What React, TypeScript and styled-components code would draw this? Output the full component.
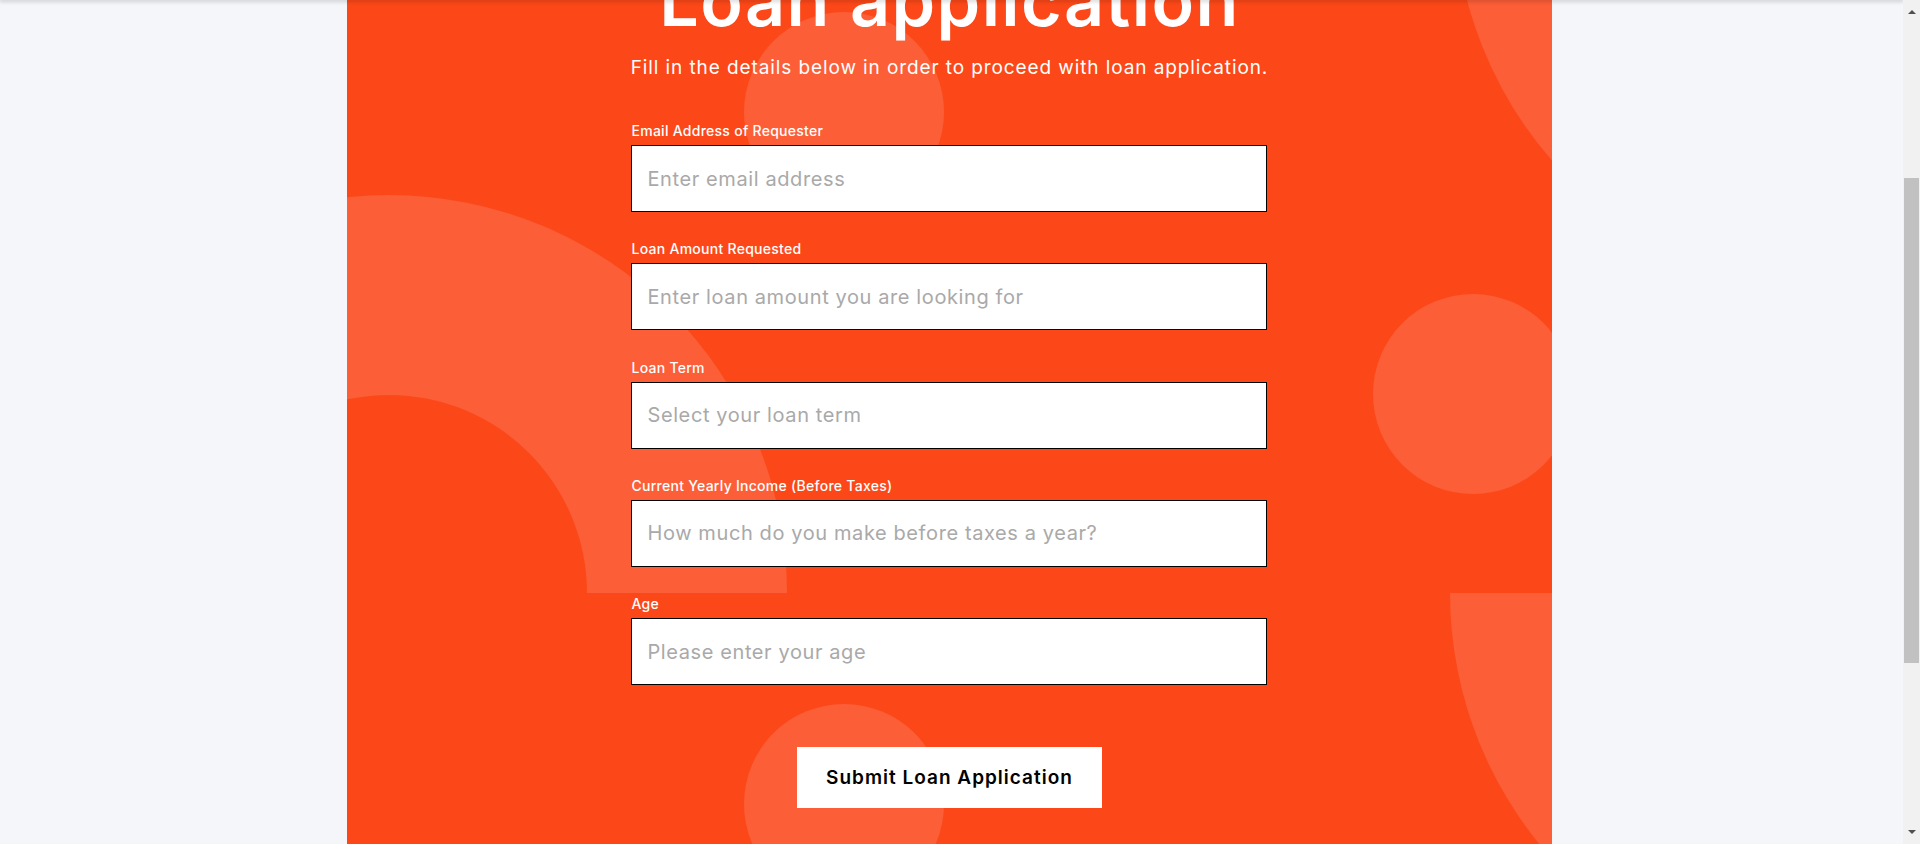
import React, { useLayoutEffect } from "react";
import styled, { createGlobalStyle } from "styled-components";

const SCROLL_Y = 278;
const ORANGE = "#fc4818";
const ORANGE_LIGHT = "#fc5e37";

const GlobalStyle = createGlobalStyle`
  html { background: #f5f6fa; }
  body {
    margin: 0;
    background: #f5f6fa;
    font-family: "Inter", "Noto Sans", sans-serif;
  }
`;

const TopShade = styled.div`
  position: fixed;
  top: 0;
  left: 0;
  right: 17px;
  height: 0;
  box-shadow: 0 0 4px 1px rgba(0, 0, 0, 0.3);
  z-index: 10;
`;

/* window scrollbar look-alike (the browser's own bar is hidden in the capture) */
const ScrollBar = styled.div`
  position: fixed;
  top: 0;
  right: 0;
  bottom: 0;
  width: 17px;
  background: #f1f1f1;
  display: flex;
  flex-direction: column;
  z-index: 20;
`;

const ScrollButton = styled.div<{ $dir: "up" | "down" }>`
  flex: 0 0 17px;
  box-sizing: border-box;
  display: flex;
  justify-content: center;
  align-items: ${(p) => (p.$dir === "up" ? "flex-end" : "flex-start")};
  padding: ${(p) => (p.$dir === "up" ? "0 0 3px" : "3px 0 0")};
  &::before {
    content: "";
    width: 0;
    height: 0;
    border-left: 4px solid transparent;
    border-right: 4px solid transparent;
    ${(p) =>
      p.$dir === "up"
        ? "border-bottom: 4px solid #505050;"
        : "border-top: 4px solid #505050;"}
  }
`;

const ScrollTrack = styled.div`
  flex: 1;
  display: flex;
  flex-direction: column;
`;

const ScrollThumb = styled.div`
  margin: 160.5px 1px 0;
  height: 485px;
  background: #c1c1c1;
`;

const Page = styled.main`
  display: flex;
  justify-content: center;
  padding-right: 21px;
`;

const Panel = styled.section`
  position: relative;
  overflow: hidden;
  width: 1205px;
  min-height: 1409px;
  box-sizing: border-box;
  background: ${ORANGE};
  padding-top: 237px;
  display: flex;
  flex-direction: column;
  align-items: center;
`;

const Decor = styled.svg`
  position: absolute;
  top: 0;
  left: 0;
  width: 1205px;
  height: 1409px;
  pointer-events: none;
`;

const Content = styled.div`
  position: relative;
  z-index: 1;
  display: flex;
  flex-direction: column;
  align-items: center;
`;

const Title = styled.h1`
  margin: 0;
  color: #fff;
  font-size: 70px;
  font-weight: 600;
  line-height: 84px;
  letter-spacing: 1.4px;
  text-align: center;
`;

const Subtitle = styled.p`
  margin: 11px 0 39px;
  color: #fff;
  font-size: 19px;
  font-weight: 400;
  line-height: 28px;
  letter-spacing: 0.9px;
  text-align: center;
`;

const Form = styled.form`
  width: 636px;
  display: flex;
  flex-direction: column;
  align-items: center;
`;

const Field = styled.div`
  width: 100%;
  display: flex;
  flex-direction: column;
  gap: 4px;
  margin-bottom: 27.25px;
`;

const Label = styled.label`
  color: #fff;
  font-size: 14px;
  font-weight: 500;
  line-height: 20px;
  letter-spacing: 0.27px;
`;

const Input = styled.input`
  box-sizing: border-box;
  width: 100%;
  height: 67px;
  margin: 0;
  padding: 0 15px;
  border: 1px solid #000;
  border-radius: 0;
  background: #fff;
  font-family: inherit;
  font-size: 20px;
  letter-spacing: 0.6px;
  color: #222;
  outline: none;
  &::placeholder {
    color: #a9a9a9;
  }
`;

const SubmitButton = styled.button`
  margin-top: 34.5px;
  height: 61px;
  width: 305px;
  padding: 0;
  border: none;
  background: #fff;
  color: #000;
  font-family: inherit;
  font-size: 19px;
  font-weight: 600;
  letter-spacing: 1px;
  cursor: pointer;
`;

const fields = [
  { id: "email", label: "Email Address of Requester", placeholder: "Enter email address", type: "email" },
  { id: "amount", label: "Loan Amount Requested", placeholder: "Enter loan amount you are looking for", type: "text" },
  { id: "term", label: "Loan Term", placeholder: "Select your loan term", type: "text" },
  { id: "income", label: "Current Yearly Income (Before Taxes)", placeholder: "How much do you make before taxes a year?", type: "text" },
  { id: "age", label: "Age", placeholder: "Please enter your age", type: "text" },
];

function Decorations() {
  return (
    <Decor viewBox="0 0 1205 1409" aria-hidden="true">
      <circle cx="497" cy="390" r="100" fill={ORANGE_LIGHT} />
      <circle cx="1126" cy="672" r="100" fill={ORANGE_LIGHT} />
      <circle cx="497" cy="1082" r="100" fill={ORANGE_LIGHT} />
      <path d="M -356 871 A 398 398 0 0 1 440 871 L 240 871 A 198 198 0 0 0 -156 871 Z" fill={ORANGE_LIGHT} />
      <circle cx="1505" cy="177" r="298" fill="none" stroke={ORANGE_LIGHT} strokeWidth="200" />
      <path d="M 1103 871 A 398 398 0 0 0 1899 871 L 1699 871 A 198 198 0 0 1 1303 871 Z" fill={ORANGE_LIGHT} />
    </Decor>
  );
}

export default function App() {
  useLayoutEffect(() => {
    if ("scrollRestoration" in window.history) window.history.scrollRestoration = "manual";
    window.scrollTo(0, SCROLL_Y);
    const t = window.setTimeout(() => window.scrollTo(0, SCROLL_Y), 50);
    return () => window.clearTimeout(t);
  }, []);

  return (
    <>
      <GlobalStyle />
      <TopShade />
      <ScrollBar aria-hidden="true">
        <ScrollButton $dir="up" />
        <ScrollTrack>
          <ScrollThumb />
        </ScrollTrack>
        <ScrollButton $dir="down" />
      </ScrollBar>
      <Page>
        <Panel>
          <Decorations />
          <Content>
            <Title>Loan application</Title>
            <Subtitle>Fill in the details below in order to proceed with loan application.</Subtitle>
            <Form onSubmit={(e) => e.preventDefault()}>
              {fields.map((f) => (
                <Field key={f.id}>
                  <Label htmlFor={f.id}>{f.label}</Label>
                  <Input id={f.id} type={f.type} placeholder={f.placeholder} />
                </Field>
              ))}
              <SubmitButton type="submit">Submit Loan Application</SubmitButton>
            </Form>
          </Content>
        </Panel>
      </Page>
    </>
  );
}
